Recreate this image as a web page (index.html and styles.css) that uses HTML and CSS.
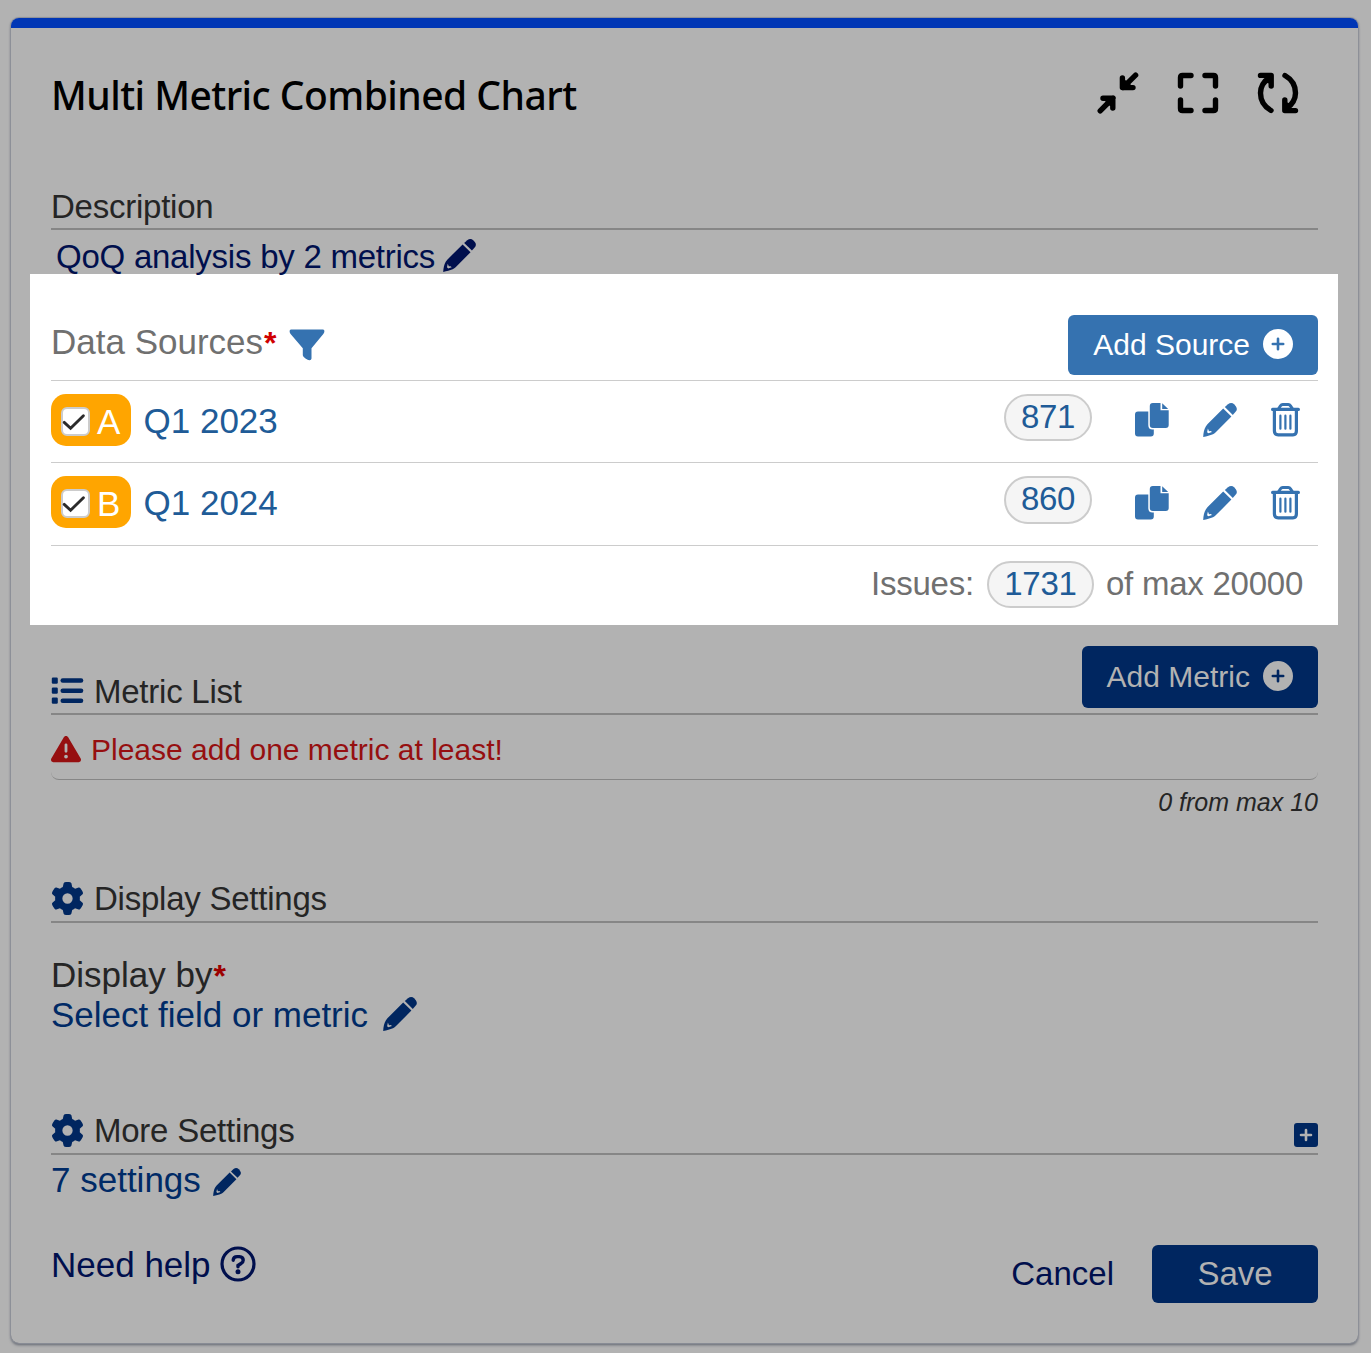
FILE: index.html
```html
<!DOCTYPE HTML>
<html>
<head>
<meta charset="utf-8">
<title>Multi Metric Combined Chart</title>
<link rel="stylesheet" href="styles.css">
</head>

<body>
<!-- shared icons -->
<svg class="sprite" width="0" height="0">
	<symbol id="pencil" viewBox="0 0 34 34">
		<path fill-rule="evenodd" d="M20.2 5.6L28.4 13.6L13 29.1C12.2 29.9 11.2 30.6 10 31.2C7 32.5 4 33.2 0.2 33.9C0.4 30 1.1 26.2 2.8 23.4L4.4 21.3ZM4.9 25.5L4.1 29.2L5.4 30.3L9 29.1L7.8 28L6 28.2Z"/>
		<path d="M21.8 4.1L25 1.2Q28.4-1.2 31.4 1.5L32.8 3.2Q35 6.1 32.6 8.8L29.8 11.9Z"/>
	</symbol>
	<symbol id="copy" viewBox="0 0 34 34">
		<path d="M3 8.5H13.3V22Q13.3 26.5 17.5 26.5H18.8V30.5Q18.8 33.5 15.8 33.5H3Q0 33.5 0 30.5V11.5Q0 8.5 3 8.5Z"/>
		<path d="M17.8 0H25.5V7.3H33.7V22Q33.7 25 30.7 25H17.8Q14.8 25 14.8 22V3Q14.8 0 17.8 0Z"/>
		<path d="M27.2 0.2L33.2 6H27.2Z"/>
	</symbol>
	<symbol id="trash" viewBox="0 0 30 34">
		<path d="M1.6 6.4H27.4M3.4 7V28Q3.4 31.8 7.2 31.8H22Q25.4 31.8 25.4 28V7" fill="none" stroke="currentColor" stroke-width="3.2" stroke-linecap="round"/>
		<path d="M7.4 6L9.5 2.8Q10.3 1.6 11.7 1.6H17.3Q18.7 1.6 19.5 2.8L21.6 6" fill="none" stroke="currentColor" stroke-width="3"/>
		<path d="M9.4 12.7V25.7M14.4 12.7V25.7M19.4 12.7V25.7" stroke="currentColor" stroke-width="2.2" stroke-linecap="round"/>
	</symbol>
	<symbol id="gear" viewBox="0 0 512 512">
		<path d="M495.9 166.6c3.2 8.7 .5 18.4-6.4 24.6l-43.3 39.4c1.1 8.3 1.7 16.8 1.7 25.4s-.6 17.1-1.7 25.4l43.3 39.4c6.9 6.2 9.6 15.9 6.4 24.6c-4.4 11.9-9.7 23.3-15.8 34.3l-4.7 8.1c-6.6 11-14 21.4-22.1 31.2c-5.9 7.2-15.7 9.6-24.5 6.8l-55.7-17.7c-13.4 10.3-28.2 18.9-44 25.4l-12.5 57.1c-2 9.1-9 16.3-18.2 17.8c-13.8 2.3-28 3.5-42.5 3.5s-28.7-1.2-42.5-3.5c-9.2-1.5-16.2-8.7-18.2-17.8l-12.5-57.1c-15.8-6.5-30.6-15.1-44-25.4L83.1 425.9c-8.8 2.8-18.6 .3-24.5-6.8c-8.1-9.8-15.5-20.2-22.1-31.2l-4.7-8.1c-6.1-11-11.4-22.4-15.8-34.3c-3.2-8.7-.5-18.4 6.4-24.6l43.3-39.4C64.6 273.1 64 264.6 64 256s.6-17.1 1.7-25.4L22.4 191.2c-6.9-6.2-9.6-15.9-6.4-24.6c4.4-11.9 9.7-23.3 15.8-34.3l4.7-8.1c6.6-11 14-21.4 22.1-31.2c5.9-7.2 15.7-9.6 24.5-6.8l55.7 17.7c13.4-10.3 28.2-18.9 44-25.4l12.5-57.1c2-9.1 9-16.3 18.2-17.8C227.3 1.2 241.5 0 256 0s28.7 1.2 42.5 3.5c9.2 1.5 16.2 8.7 18.2 17.8l12.5 57.1c15.8 6.5 30.6 15.1 44 25.4l55.7-17.7c8.8-2.8 18.6-.3 24.5 6.8c8.1 9.8 15.5 20.2 22.1 31.2l4.7 8.1c6.1 11 11.4 22.4 15.8 34.3zM256 336a80 80 0 1 0 0-160 80 80 0 1 0 0 160z"/>
	</symbol>
	<symbol id="plus" viewBox="0 0 30 30">
		<path fill-rule="evenodd" d="M15 0A15 15 0 1 1 15 30A15 15 0 1 1 15 0ZM13.7 9.8V13.7H9.8Q8.5 13.7 8.5 15T9.8 16.3H13.7V20.2Q13.7 21.5 15 21.5T16.3 20.2V16.3H20.2Q21.5 16.3 21.5 15T20.2 13.7H16.3V9.8Q16.3 8.5 15 8.5T13.7 9.8Z"/>
	</symbol>
	<symbol id="check" viewBox="0 0 30 30">
		<rect x="1" y="1" width="27" height="27" rx="5" fill="#fff" stroke="#ccc" stroke-width="2"/>
		<path d="M3.2 15.4L9.6 21.2L22.4 8.8" fill="none" stroke="#2b2b2b" stroke-width="2.9" stroke-linecap="round"/>
	</symbol>
</svg>

<div class="card">
	<header class="header">
		<h1>Multi Metric Combined Chart</h1>
		<div class="tools">
			<svg width="42" height="42" viewBox="0 0 42 42"><path d="M38.6 3.2L26 15.6M25.4 6V15.6H36M3.2 38.8L16 26M6 26.2H15.8V36M28.5 11V13H31M13 31V29H11"/></svg>
			<svg width="42" height="42" viewBox="0 0 42 42"><path d="M3.5 14V5.5Q3.5 3.5 5.5 3.5H14M28 3.5H36.5Q38.5 3.5 38.5 5.5V14M38.5 28V36.5Q38.5 38.5 36.5 38.5H28M14 38.5H5.5Q3.5 38.5 3.5 36.5V28"/></svg>
			<svg width="42" height="42" viewBox="0 0 42 42"><path d="M3.5 3.4H14.2V14M13 5Q3.5 11.5 3.5 21Q3.5 32.5 14 38.5M38.5 38.6H27.8V28M29 37Q38.5 30.5 38.5 21Q38.5 9.5 28 3.5M12.5 6V9M29.5 36V33"/></svg>
		</div>
	</header>

	<section>
		<h2 class="label">Description</h2>
		<a class="desc">QoQ analysis by 2 metrics <svg class="icon" width="33" height="33"><use href="#pencil"/></svg></a>
	</section>

	<section class="sources">
		<div class="sources-head">
			<h2>Data Sources<i class="req">*</i></h2>
			<svg class="icon funnel" width="36" height="32" viewBox="0 0 36 32"><path d="M2 0.5H34Q35.5 0.5 35.4 2.3Q35.3 3.7 34.3 5L22.5 19.3V29.5Q22.4 31.3 20.4 31.2Q18.8 31 16.5 29.5Q13.8 27.8 13.8 26.2V19.3L1.6 5Q0.6 3.7 0.6 2.3Q0.5 0.5 2 0.5Z"/></svg>
			<button class="btn">Add Source<svg class="icon" width="30" height="30"><use href="#plus"/></svg></button>
		</div>
		<div class="row">
			<span class="tag"><svg width="30" height="30"><use href="#check"/></svg>A</span>
			<a class="name">Q1 2023</a>
			<span class="pill">871</span>
			<svg class="icon" width="34" height="34"><use href="#copy"/></svg>
			<svg class="icon" width="34" height="34"><use href="#pencil"/></svg>
			<svg class="icon" width="30" height="34"><use href="#trash"/></svg>
		</div>
		<div class="row last">
			<span class="tag"><svg width="30" height="30"><use href="#check"/></svg>B</span>
			<a class="name">Q1 2024</a>
			<span class="pill">860</span>
			<svg class="icon" width="34" height="34"><use href="#copy"/></svg>
			<svg class="icon" width="34" height="34"><use href="#pencil"/></svg>
			<svg class="icon" width="30" height="34"><use href="#trash"/></svg>
		</div>
		<div class="total">Issues:<span class="pill wide">1731</span>of max 20000</div>
	</section>

	<section class="metrics">
		<div class="metrics-head">
			<h2 class="label"><svg class="icon" width="33" height="28" viewBox="0 0 33 28"><rect x="0.8" y="0.5" width="6" height="6.2" rx="1.2"/><rect x="0.8" y="10.5" width="6" height="6.2" rx="1.2"/><rect x="0.8" y="20.5" width="6" height="6.2" rx="1.2"/><rect x="9.5" y="1.3" width="22.8" height="4.5" rx="2.2"/><rect x="9.5" y="11.4" width="22.8" height="4.5" rx="2.2"/><rect x="9.5" y="21.5" width="22.8" height="4.5" rx="2.2"/></svg>Metric List</h2>
			<button class="btn">Add Metric<svg class="icon" width="30" height="30"><use href="#plus"/></svg></button>
		</div>
		<p class="error"><svg class="icon" width="30" height="30" viewBox="0 0 512 512"><path d="M256 32c14.2 0 27.3 7.5 34.5 19.8l216 368c7.3 12.4 7.3 27.7 .2 40.1S486.3 480 472 480L40 480c-14.3 0-27.6-7.7-34.7-20.1s-7-27.8 .2-40.1l216-368C228.7 39.5 241.8 32 256 32zm0 128c-13.3 0-24 10.7-24 24l0 112c0 13.3 10.7 24 24 24s24-10.7 24-24l0-112c0-13.3-10.7-24-24-24zm32 224a32 32 0 1 0-64 0 32 32 0 1 0 64 0z"/></svg>Please add one metric at least!</p>
		<p class="count">0 from max 10</p>
	</section>

	<section class="display">
		<h2 class="label"><svg class="icon" width="33" height="33"><use href="#gear"/></svg>Display Settings</h2>
		<h3>Display by<i class="req">*</i></h3>
		<a class="link">Select field or metric<svg class="icon" width="34" height="34"><use href="#pencil"/></svg></a>
	</section>

	<section class="more">
		<h2 class="label"><svg class="icon" width="33" height="33"><use href="#gear"/></svg>More Settings
			<svg class="icon expand" width="24" height="24" viewBox="0 0 24 24"><rect width="24" height="24" rx="3"/><path d="M12 7V17M7 12H17" stroke="#b2b2b2" stroke-width="2.6" stroke-linecap="round"/></svg>
		</h2>
		<a class="link small">7 settings<svg class="icon" width="28" height="28"><use href="#pencil"/></svg></a>
	</section>

	<footer class="footer">
		<a class="help">Need help<svg width="36" height="36" viewBox="0 0 36 36"><circle cx="18" cy="18" r="16" fill="none" stroke="currentColor" stroke-width="3.2"/><path d="M13.2 14.2Q13.4 10.6 17.2 10.6H19.4Q23.2 10.8 23.2 14.2Q23.2 16.2 21 17.5L18 19.5V20.8" fill="none" stroke="currentColor" stroke-width="3.4" stroke-linecap="round"/><circle cx="18" cy="25.8" r="2.5" fill="currentColor"/></svg></a>
		<a class="cancel">Cancel</a>
		<button class="btn save">Save</button>
	</footer>
</div>
</body>
</html>
```
FILE: styles.css
```css
* {margin:0; padding:0; box-sizing:border-box;}
body {background:#b2b2b2; min-height:1353px; padding:18px 0 0 11px; font-family:"Liberation Sans", Arial, sans-serif; font-size:33px; color:#252525;}
h1,h2,h3 {font-weight:normal;}
svg {flex:none; display:block;}
.sprite {position:absolute;}
.icon {fill:currentColor;}

.card {width:1347px; height:1325px; padding:0 40px; border-top:10px solid #0036b5; border-radius:8px; box-shadow:0 0 1px 1px #8c8f98, 0 2px 3px #5f636e;}

.header {height:156px; padding-bottom:26px; display:flex; align-items:center; justify-content:space-between;}
.header h1 {font-family:"Noto Sans", "Open Sans", sans-serif; font-weight:500; font-size:39px; line-height:50px; letter-spacing:-0.54px; color:#000; padding-top:4px;}
.tools {display:flex; gap:38px; margin-right:19px;}
.tools path {fill:none; stroke:#000; stroke-width:5.4; stroke-linecap:round; stroke-linejoin:round;}

.label {font-size:33px; line-height:46px; height:46px; letter-spacing:-0.24px; border-bottom:2px solid #868686; display:flex; align-items:center; padding-top:2px;}
.label .icon {color:#002660; margin:-1px 10px 0 0;}
.req {color:#9c0000; font-style:normal; font-weight:bold; font-size:32px; line-height:1; margin-left:1px;}
.desc {display:flex; align-items:center; gap:8px; height:44px; padding:10px 0 0 5px; line-height:36px; letter-spacing:-0.24px; color:#000f4d;}
.desc svg {margin-top:-3px;}

/* highlighted block */
.sources {background:#fff; height:351px; margin:0 -20px 0 -21px; padding:0 20px 0 21px; color:#707070;}
.sources-head {height:107px; border-bottom:1px solid #ccc; display:flex; padding-top:41px;}
.sources-head h2 {font-size:35px; line-height:54px;}
.sources-head .req {color:#d00000;}
.sources-head .btn {margin-left:auto; background:#3572b0; color:#fff;}
.funnel {color:#3572b0; margin:14px 0 0 12px;}
.btn {height:60px; padding:0 25px; border:0; border-radius:6px; background:#002660; color:#b2b2b2; font:30px "Liberation Sans", Arial, sans-serif; display:flex; align-items:center; gap:13px;}
.btn .icon {margin-top:-2px;}

.row {height:82px; border-bottom:1px solid #ccc; display:flex; align-items:flex-start; padding:13px 17px 0 0; color:#3572b0;}
.row.last {height:83px;}
.row > .icon {margin:9px 0 0 34px;}
.row.last > .icon {margin-top:10px;}
.row .pill + .icon {margin-left:43px;}
.tag {width:80px; height:52px; border-radius:15px; background:#ffa500; color:#fff; font-size:35px; line-height:55px; display:flex; padding-left:10px; gap:6px;}
.tag svg {margin-top:13px;}
.name {font-size:35px; line-height:54px; margin:0 auto 0 12.5px; color:#205b97;}
.row .pill {letter-spacing:-0.3px;}
.pill {width:88px; height:47px; border:2px solid #ccc; border-radius:24px; background:#f5f5f5; color:#205b97; font-size:33px; line-height:41px; text-align:center;}
.last .pill {height:48px;}
.pill.wide {width:107px; margin:0 12px 0 13px;}
.total {display:flex; justify-content:flex-end; padding:15px 15px 0 0; line-height:45px; letter-spacing:-0.24px;}

.metrics-head {height:90px; border-bottom:2px solid #868686; display:flex; justify-content:space-between; align-items:flex-end;}
.metrics-head .label {border:0; height:44px;}
.metrics-head .label .icon {margin-top:-3px;}
.metrics-head .btn {height:62px; margin-bottom:5px;}
.error {height:65px; border-bottom:1px solid #868686; border-radius:0 0 8px 8px; color:#960f10; font-size:30px; line-height:69px; display:flex; gap:10px;}
.error svg {margin-top:19px;}
.count {font-style:italic; font-size:25px; line-height:44px; text-align:right;}

.display {margin-top:53px; height:252px;}
.display .label, .more .label {line-height:44px; padding-top:0;}
.display h3 {font-size:35px; line-height:40px; margin-top:32px;}
.link {display:flex; font-size:35px; line-height:40px; color:#002a66;}
.link svg {margin:2px 0 0 15px; color:#002660;}
.more {margin-top:-20px;}
.label .icon.expand {margin:8px 0 0 auto;}
.link.small {padding-top:5px;}
.link.small svg {margin:8px 0 0 12px;}

.footer {display:flex; align-items:flex-start; margin-top:45px; color:#000f4d;}
.help {display:flex; gap:9px; font-size:35px; line-height:40px; margin-right:auto;}
.help svg {margin-top:1px;}
.cancel {line-height:58px; margin-right:38px;}
.save {width:166px; height:58px; justify-content:center; font-size:33px;}
```
